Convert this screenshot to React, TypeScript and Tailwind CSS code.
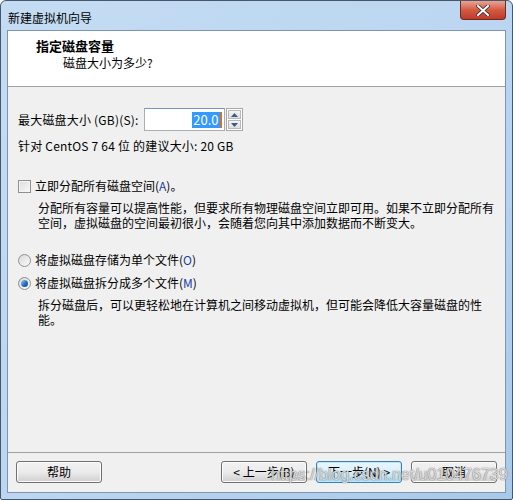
import { useState } from 'react'

const font = { fontFamily: '"Noto Sans CJK SC", "Noto Sans", sans-serif' }

function WinButton({ label, focused }: { label: string; focused?: boolean }) {
  return (
    <button
      className={
        'w-[86px] h-[22px] rounded-[3px] border text-[12px] leading-none text-black flex items-center justify-center ' +
        (focused
          ? 'border-[#3c7fb1] bg-gradient-to-b from-[#eaf6fd] via-[#d9f0fc] to-[#a7d9f5] shadow-[inset_0_0_0_1px_#bfe6fa]'
          : 'border-[#707070] bg-gradient-to-b from-[#f2f2f2] via-[#ebebeb] to-[#cfcfcf] shadow-[inset_0_0_0_1px_#fcfcfc]')
      }
    >
      {label}
    </button>
  )
}

function Radio({ on }: { on: boolean }) {
  return (
    <span className="w-[13px] h-[13px] rounded-full border border-[#8f8f8f] bg-gradient-to-br from-[#d8d8d8] to-[#fbfbfb] flex items-center justify-center">
      {on && <span className="w-[7px] h-[7px] rounded-full bg-gradient-to-br from-[#9ad0f6] via-[#2b78c8] to-[#0a3f8a]" />}
    </span>
  )
}

export default function App() {
  const [mode, setMode] = useState<'single' | 'multi'>('multi')
  const [alloc, setAlloc] = useState(false)

  return (
    <div className="w-[513px] h-[500px] bg-white overflow-hidden" style={font}>
      <div className="relative w-full h-full overflow-hidden flex flex-col rounded-t-[6px] rounded-b-[2px] border border-[#47576a] bg-gradient-to-br from-[#c4dcf3] via-[#bcd6f1] to-[#a9c9ea]">

        {/* ── Title bar ── */}
        <div className="h-[29px] flex items-start justify-between pl-[7px]">
          <span className="mt-[9px] text-[12px] leading-[16px] text-black">新建虚拟机向导</span>
          <div className="mr-[6px] w-[46px] h-[19px] rounded-b-[4px] border border-t-0 border-[#6b2a22] bg-gradient-to-b from-[#e8a393] via-[#d25a43] to-[#c0392b] flex items-center justify-center">
            <svg width="14" height="11" viewBox="0 0 14 11">
              <path d="M2 1 L12 10 M12 1 L2 10" stroke="#3b2a2a" strokeWidth="3.6" strokeLinecap="square" />
              <path d="M2 1 L12 10 M12 1 L2 10" stroke="#ffffff" strokeWidth="2" strokeLinecap="square" />
            </svg>
          </div>
        </div>

        {/* ── Client area ── */}
        <div className="flex-1 mx-[6px] mb-[6px] border border-[#7b95b3] bg-[#f0f0f0] flex flex-col text-[12px] text-black">

          {/* header */}
          <div className="h-[56px] bg-white border-b border-[#a0a0a0] flex flex-col pt-[6px]">
            <p className="pl-[28px] font-bold text-[13px] leading-[18px]">指定磁盘容量</p>
            <p className="pl-[55px] leading-[16px]">磁盘大小为多少?</p>
          </div>

          {/* body */}
          <div className="flex-1 flex flex-col pl-[10px]">
            <div className="mt-[21px] flex items-center gap-[5px]">
              <span className="leading-[16px] tracking-[0.2px]">最大磁盘大小 (GB)(S):</span>
              <div className="flex items-center">
                <div className="w-[81px] h-[23px] border border-[#abadb3] border-t-[#6e98bf] bg-white flex items-center justify-end pr-[2px]">
                  <span className="bg-[#3399ff] text-white leading-[16px] text-[13px] px-[1px]">20.0</span>
                  <span className="w-[2px] h-[16px] bg-[#e07020]" />
                </div>
                <div className="ml-[1px] h-[23px] w-[17px] border border-[#a8a8a8] bg-white flex flex-col p-[1px] gap-[1px]">
                  <div className="flex-1 border border-[#b8b8b8] bg-gradient-to-b from-[#f4f4f4] to-[#dedede] flex items-center justify-center">
                    <svg width="7" height="4" viewBox="0 0 7 4"><path d="M3.5 0 L7 4 L0 4 Z" fill="#3d5a80" /></svg>
                  </div>
                  <div className="flex-1 border border-[#b8b8b8] bg-gradient-to-b from-[#f4f4f4] to-[#dedede] flex items-center justify-center">
                    <svg width="7" height="4" viewBox="0 0 7 4"><path d="M0 0 L7 0 L3.5 4 Z" fill="#3d5a80" /></svg>
                  </div>
                </div>
              </div>
            </div>
            <p className="mt-[7px] leading-[16px] tracking-[0.2px]">针对 CentOS 7 64 位 的建议大小: 20 GB</p>

            <label className="mt-[24px] flex items-center gap-[4px] cursor-default" onClick={() => setAlloc(!alloc)}>
              <span className="w-[13px] h-[13px] border border-[#8f8f8f] bg-gradient-to-br from-[#dcdcdc] to-[#f8f8f8] shadow-[inset_0_0_0_1px_#f4f4f4] flex items-center justify-center">
                {alloc && <span className="text-[10px] leading-none">✓</span>}
              </span>
              <span className="leading-[16px]">立即分配所有磁盘空间(<span className="text-[#1a3ea8]">A</span>)。</span>
            </label>
            <p className="mt-[6px] pl-[20px] pr-[4px] leading-[15px]">
              分配所有容量可以提高性能，但要求所有物理磁盘空间立即可用。如果不立即分配所有空间，虚拟磁盘的空间最初很小，会随着您向其中添加数据而不断变大。
            </p>

            <label className="mt-[22px] flex items-center gap-[4px] cursor-default" onClick={() => setMode('single')}>
              <Radio on={mode === 'single'} />
              <span className="leading-[16px]">将虚拟磁盘存储为单个文件(<span className="text-[#1a3ea8]">O</span>)</span>
            </label>
            <label className="mt-[7px] flex items-center gap-[4px] cursor-default" onClick={() => setMode('multi')}>
              <Radio on={mode === 'multi'} />
              <span className="leading-[16px]">将虚拟磁盘拆分成多个文件(<span className="text-[#1a3ea8]">M</span>)</span>
            </label>
            <p className="mt-[6px] pl-[20px] pr-[4px] leading-[15px]">
              拆分磁盘后，可以更轻松地在计算机之间移动虚拟机，但可能会降低大容量磁盘的性能。
            </p>
          </div>

          {/* footer */}
          <div className="h-[40px] border-t border-[#a0a0a0] flex items-center px-[8px] pb-[1px]">
            <WinButton label="帮助" />
            <div className="flex-1" />
            <div className="flex gap-[9px]">
              <WinButton label="< 上一步(B)" />
              <WinButton label="下一步(N) >" focused />
              <WinButton label="取消" />
            </div>
          </div>
        </div>

        {/* watermark */}
        <span
          className="absolute left-[270px] top-[466px] text-[16px] leading-none text-white/75 pointer-events-none [text-shadow:0_0_1px_rgba(90,90,90,0.9),0_0_1px_rgba(90,90,90,0.6)]"
          style={{ fontFamily: '"Liberation Sans", Arial, sans-serif' }}
        >
          https://blog.csdn.net/u010476739
        </span>
      </div>
    </div>
  )
}
